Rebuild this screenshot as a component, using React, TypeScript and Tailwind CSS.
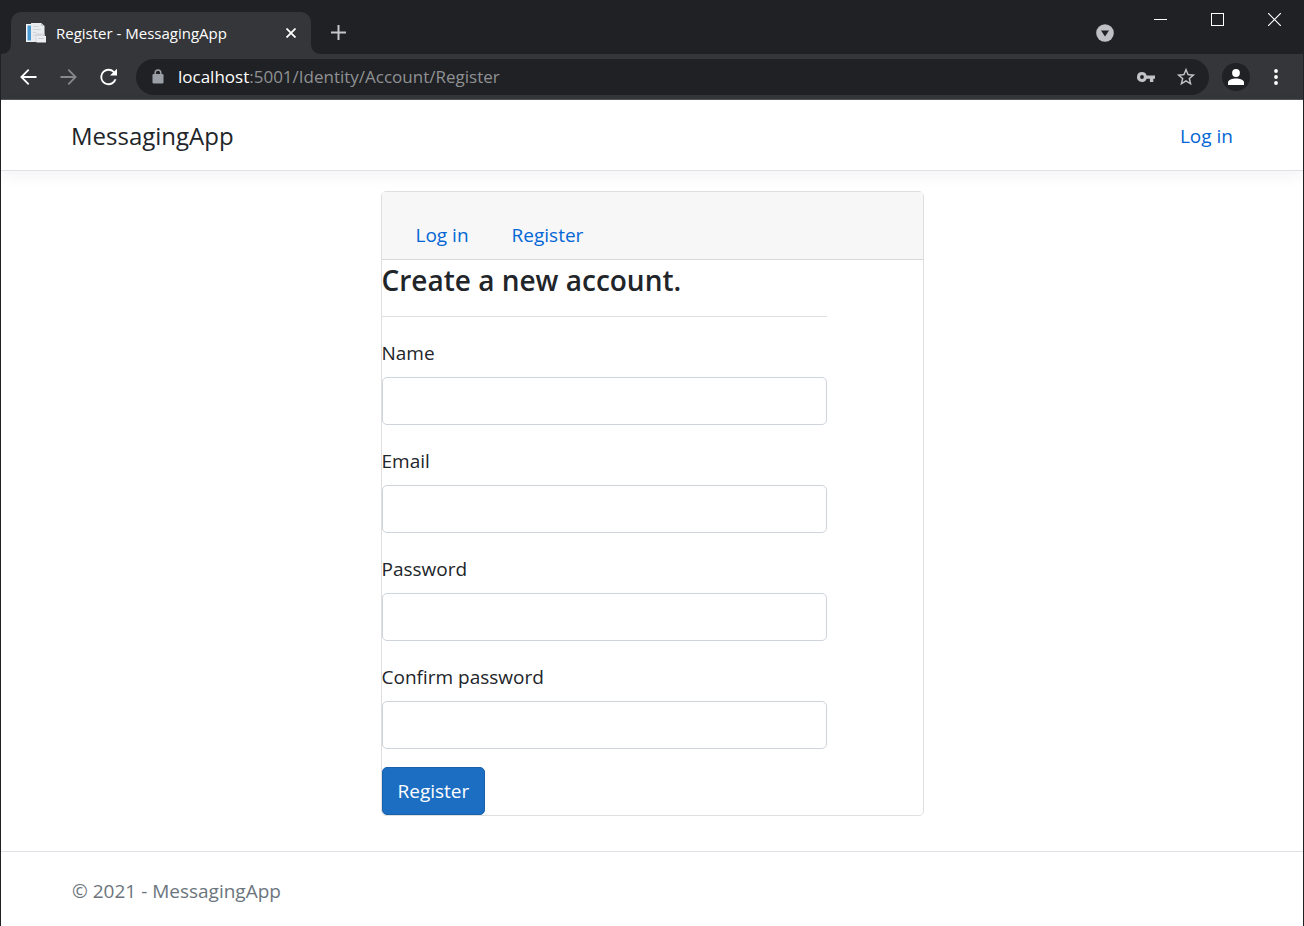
import { useState } from "react";

const iconButton = "flex size-7 shrink-0 items-center justify-center rounded-full";

function Favicon() {
  return (
    <svg width="20" height="20" viewBox="0 0 20 20" aria-hidden="true" className="shrink-0">
      <path d="M0 1h5v18H0z" fill="#f4f6f8" />
      <path d="M1.500 2.500h3.500v15H1.500z" fill="#4a9bd4" />
      <path d="M5 0h10l3.500 3v16H5z" fill="#e9ecef" />
      <path d="M15 0v3h3.500z" fill="#c3c8ce" />
      <path d="M7 3.500h6M7 6.500h8M7 9.500h3M7 12.500h2" stroke="#d0d5da" strokeWidth="1" />
      <path d="M9.500 10.500h9v8.500h-9z" fill="#d3d7dd" />
      <path d="M10.500 13h9.500v6.500h-9.500z" fill="#eeeff3" />
      <path d="M12 15.500h6" stroke="#cbcfd7" />
    </svg>
  );
}

function TabStrip() {
  return (
    <div className="flex h-[54px] bg-[#202124] pl-[10px]">
      <div className="relative mt-3 flex w-[300px] items-center rounded-t-[10px] bg-[#35363a] pr-[13px] pl-[15px] text-white">
        <svg className="absolute bottom-0 -left-[10px]" width="10" height="10" viewBox="0 0 10 10" aria-hidden="true">
          <path d="M10 0v10H0C6 10 10 6 10 0z" fill="#35363a" />
        </svg>
        <svg className="absolute -right-[10px] bottom-0" width="10" height="10" viewBox="0 0 10 10" aria-hidden="true">
          <path d="M0 0v10h10C4 10 0 6 0 0z" fill="#35363a" />
        </svg>
        <Favicon />
        <span className="ml-[10px] flex-1 text-[15px] leading-5 whitespace-nowrap">Register - MessagingApp</span>
        <button type="button" aria-label="Close tab" className="p-[2px]">
          <svg width="10" height="10" viewBox="0 0 10 10" stroke="#fff" strokeWidth="1.800">
            <path d="M.5.5l9 9M9.500.5l-9 9" />
          </svg>
        </button>
      </div>
      <button type="button" aria-label="New tab" className="mt-[25px] ml-5 self-start">
        <svg width="15" height="15" viewBox="0 0 15 15" stroke="#c5c7ca" strokeWidth="2">
          <path d="M7.500 0v15M0 7.500h15" />
        </svg>
      </button>
      <div className="ml-auto flex items-start">
        <button type="button" aria-label="Search tabs" className="mt-6 mr-[18px]">
          <svg width="18" height="18" viewBox="0 0 18 18">
            <circle cx="9" cy="9" r="8.800" fill="#bdc1c6" />
            <path d="M5 6.500h8l-4 6z" fill="#202124" />
          </svg>
        </button>
        <button type="button" aria-label="Minimize" className="flex h-[39px] w-[57px] items-center justify-center">
          <svg width="13" height="13" viewBox="0 0 13 13" shapeRendering="crispEdges">
            <path d="M0 6.500h13" stroke="#fff" />
          </svg>
        </button>
        <button type="button" aria-label="Maximize" className="flex h-[39px] w-[57px] items-center justify-center">
          <svg width="13" height="13" viewBox="0 0 13 13" shapeRendering="crispEdges">
            <path d="M.5.5h12v12H.5z" fill="none" stroke="#fff" />
          </svg>
        </button>
        <button type="button" aria-label="Close" className="flex h-[39px] w-[57px] items-center justify-center">
          <svg width="13" height="13" viewBox="0 0 13 13">
            <path d="M0 0l13 13M13 0L0 13" stroke="#fff" strokeWidth="1.200" />
          </svg>
        </button>
      </div>
    </div>
  );
}

function Toolbar() {
  return (
    <div className="flex h-[46px] items-center border-b border-[#56575b] bg-[#35363a] px-[13px]">
      <div className="flex gap-3">
        <button type="button" aria-label="Back" className={iconButton}>
          <svg width="17" height="16" viewBox="0 0 17 16" fill="none" stroke="#fff" strokeWidth="1.800">
            <path d="M16.500 8H1.500M8.700.7L1.400 8l7.300 7.300" />
          </svg>
        </button>
        <button type="button" aria-label="Forward" className={iconButton}>
          <svg width="17" height="16" viewBox="0 0 17 16" fill="none" stroke="#87888b" strokeWidth="1.800">
            <path d="M.5 8h15M8.300.7L15.600 8l-7.300 7.300" />
          </svg>
        </button>
        <button type="button" aria-label="Reload" className={iconButton}>
          <svg width="24" height="24" viewBox="0 0 24 24" fill="#fff">
            <path d="M18.400 6.200A8.200 8.200 0 0 0 12.400 3.800a8.200 8.200 0 1 0 8 10.400h-2a6.300 6.300 0 1 1-6-8.500c1.800 0 3.400.7 4.600 1.900L14 10.500h7V3.700z" />
          </svg>
        </button>
      </div>
      <div className="ml-[14px] flex h-9 min-w-0 flex-1 items-center rounded-full bg-[#202124] pr-[9px] pl-4">
        <svg width="12" height="15" viewBox="0 0 12 15" aria-hidden="true" className="shrink-0">
          <path d="M3.200 6V3.700a2.800 2.800 0 0 1 5.600 0V6" fill="none" stroke="#9aa0a6" strokeWidth="1.500" />
          <rect x=".5" y="5" width="11" height="9.500" rx="1.300" fill="#9aa0a6" />
        </svg>
        <div className="ml-[14px] flex-1 truncate text-[17px] leading-6 text-[#8f9194]">
          <span className="text-white">localhost</span>:5001/Identity/Account/Register
        </div>
        <div className="flex gap-3">
          <button type="button" aria-label="Saved passwords" className={iconButton}>
            <svg width="18" height="10" viewBox="0 0 18 10" fill="#c2c3c5">
              <path fillRule="evenodd" d="M5 0a5 5 0 0 1 4.700 3.400H18v3.300h-1.700V10h-3.400V6.700H9.700A5 5 0 1 1 5 0zm0 3.100a1.900 1.900 0 1 0 0 3.800 1.900 1.900 0 0 0 0-3.800z" />
            </svg>
          </button>
          <button type="button" aria-label="Bookmark this page" className={iconButton}>
            <svg width="22" height="22" viewBox="0 0 24 24" fill="#c2c3c5">
              <path d="M22 9.240l-7.190-.62L12 2 9.190 8.630 2 9.240l5.460 4.730L5.820 21 12 17.270 18.180 21l-1.630-7.030L22 9.240zM12 15.400l-3.760 2.270 1-4.280-3.320-2.880 4.380-.38L12 6.100l1.710 4.040 4.380.38-3.320 2.880 1 4.280L12 15.400z" />
            </svg>
          </button>
        </div>
      </div>
      <button type="button" aria-label="Profile" className="ml-[13px] flex size-7 items-center justify-center rounded-full bg-[#202124]">
        <svg width="16" height="16" viewBox="0 0 16 16" fill="#fff">
          <circle cx="8" cy="4" r="3.900" />
          <path d="M0 16v-2.500C0 10.600 4.500 9.500 8 9.500s8 1.100 8 4V16z" />
        </svg>
      </button>
      <button type="button" aria-label="Menu" className="ml-3 flex size-7 items-center justify-center">
        <svg width="4" height="16" viewBox="0 0 4 16" fill="#fff">
          <circle cx="2" cy="2" r="1.900" />
          <circle cx="2" cy="8" r="1.900" />
          <circle cx="2" cy="14" r="1.900" />
        </svg>
      </button>
    </div>
  );
}

const fields = [
  { id: "name", label: "Name", type: "text" },
  { id: "email", label: "Email", type: "email" },
  { id: "password", label: "Password", type: "password" },
  { id: "confirm-password", label: "Confirm password", type: "password" },
];

function RegisterForm() {
  const [values, setValues] = useState<Record<string, string>>({});
  return (
    <form className="w-[445px] max-w-full" onSubmit={(e) => e.preventDefault()}>
      <h1 className="text-[28px] leading-10 font-semibold">Create a new account.</h1>
      <hr className="mt-4 mb-5 border-[#dfdfdf]" />
      <div className="flex flex-col gap-5">
        {fields.map((field) => (
          <div key={field.id} className="flex flex-col">
            <label htmlFor={field.id} className="mb-2 leading-8">
              {field.label}
            </label>
            <input
              id={field.id}
              type={field.type}
              value={values[field.id] ?? ""}
              onChange={(e) => setValues({ ...values, [field.id]: e.target.value })}
              className="h-12 w-full rounded-[5px] border border-[#ced4da] bg-white px-[15px]"
            />
          </div>
        ))}
      </div>
      <button type="submit" className="mt-[18px] h-12 rounded-[5px] border border-[#1861ac] bg-[#1b6ec2] px-[15px] text-white">
        Register
      </button>
    </form>
  );
}

export default function App() {
  return (
    <div className="flex min-h-screen flex-col border-x border-[#202124] bg-white font-['Open_Sans','Noto_Sans',sans-serif] text-[19px] leading-7 text-[#212529]">
      <TabStrip />
      <Toolbar />
      <header className="flex h-[71px] items-center justify-between border-b border-[#dee2e6] px-[70px] pt-[2px] shadow-[0_5px_15px_rgba(0,0,0,0.05)]">
        <a href="#home" className="text-2xl">MessagingApp</a>
        <a href="#login" className="text-[#0366d6]">Log in</a>
      </header>
      <main className="px-5 pt-5 pb-[35px]">
        <section className="mx-auto max-w-[543px] rounded-[5px] border border-[#dfdfdf]">
          <nav className="flex h-[68px] items-end gap-[43px] border-b border-[#d8d8d8] bg-[#f7f7f7] px-[34px] pb-[10px] text-[#0366d6]">
            <a href="#login">Log in</a>
            <a href="#register">Register</a>
          </nav>
          <RegisterForm />
        </section>
      </main>
      <footer className="flex-1 border-t border-[#dee2e6] px-[71px] pt-[25px] text-[#6c757d]">
        © 2021 - MessagingApp
      </footer>
    </div>
  );
}
